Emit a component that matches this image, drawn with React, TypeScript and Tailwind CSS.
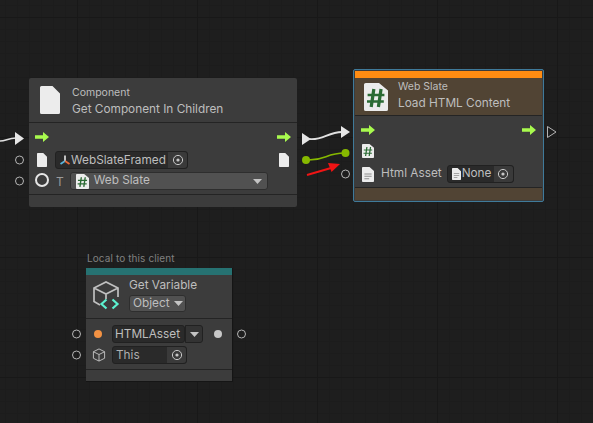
import React from "react";

const FlowArrow = () => (
  <svg width="14" height="10" viewBox="0 0 14 10" className="shrink-0">
    <path d="M0 3.2h8V0l6 5-6 5V6.8H0z" fill="#a8fa4e" />
  </svg>
);

const Doc = ({ w, h, lines, hash }: { w: number; h: number; lines?: boolean; hash?: boolean }) => (
  <svg width={w} height={h} viewBox="0 0 20 28" preserveAspectRatio="none" className="shrink-0">
    <path d="M1.500 0H12.500L20 7.500V26.500A1.500 1.500 0 0 1 18.500 28H1.500A1.500 1.500 0 0 1 0 26.500V1.500A1.500 1.500 0 0 1 1.500 0Z" fill="#ececec" />
    {lines && <path d="M4 12h12v1.800H4zM4 16.500h12v1.800H4zM4 21h8v1.800H4z" fill="#8c8c8c" />}
    {hash && (
      <path
        d="M8.200 6 6 24M14.200 6 12 24M3 12h14M2.500 18.500h14"
        stroke="#2b6b34"
        strokeWidth={w < 20 ? 2.1 : 2.7}
        fill="none"
      />
    )}
  </svg>
);

const Target = () => (
  <svg width="12" height="12" viewBox="0 0 12 12">
    <circle cx="6" cy="6" r="4.600" fill="none" stroke="#c8c8c8" strokeWidth="1" />
    <circle cx="6" cy="6" r="1.600" fill="#c8c8c8" />
  </svg>
);

const Caret = () => (
  <svg width="9" height="5" viewBox="0 0 9 5" className="shrink-0">
    <path d="M0 0h9L4.500 5z" fill="#c4c4c4" />
  </svg>
);

const Cube = ({ size }: { size: number }) => (
  <svg width={size} height={size} viewBox="0 0 14 15" fill="none" stroke="#c4c4c4" strokeWidth="1" className="shrink-0">
    <path d="M7 1 13 4v7l-6 3-6-3V4zM1 4l6 3 6-3M7 7v7" />
  </svg>
);

const VariableIcon = () => (
  <svg width="29" height="30" viewBox="0 0 29 30" fill="none" className="shrink-0">
    <path d="M8 25 2 21.500V8L14 2l12 6v9M2 8l12 6 12-6M14 14v5" stroke="#c0c0c0" strokeWidth="1.700" />
    <path d="M14.500 19.500 9.500 24l5 4.500M20.500 19.500l5 4.500-5 4.500" stroke="#5cf2d0" strokeWidth="2.200" />
  </svg>
);

const UnityMark = () => (
  <svg width="12" height="12" viewBox="0 0 12 12" className="shrink-0">
    <path d="M6 1.500V7" stroke="#e8e8e8" strokeWidth="1.600" />
    <path d="M6 7 1.500 10" stroke="#58b4dc" strokeWidth="1.800" />
    <path d="M6 7l4.500 3" stroke="#e86a3a" strokeWidth="1.800" />
  </svg>
);

function Wires() {
  return (
    <svg width="593" height="423" className="absolute left-0 top-0 pointer-events-none" fill="none">
      <path d="M0 141C6 141 8 138 16 138" stroke="#e0e0e0" strokeWidth="1.600" />
      <path d="M15 132 24 138.500 15 145z" fill="#e6e6e6" />
      <path d="M302 133 311 139 302 145z" fill="#e6e6e6" />
      <path d="M309 139C322 141 328 132 342 132" stroke="#e0e0e0" strokeWidth="1.800" />
      <path d="M341 126 350 132 341 138z" fill="#e6e6e6" />
      <path d="M306 160C326 161 325 153 345 153" stroke="#86b800" strokeWidth="1.600" />
      <circle cx="306" cy="160" r="4" fill="#86b800" />
      <circle cx="345.500" cy="153" r="4" fill="#86b800" />
      <path d="M307 175 331 168" stroke="#f01414" strokeWidth="2" />
      <path d="M340 164 328 163 331.500 172z" fill="#f01414" />
      <path d="M547.500 126.500 556 132 547.500 137.500z" stroke="#b4b4b4" strokeWidth="1" />
      {[
        [19.500, 160],
        [19.500, 181],
        [345.500, 174],
        [76.500, 334],
        [76.500, 355],
        [241.500, 334],
      ].map(([cx, cy]) => (
        <circle key={`${cx}-${cy}`} cx={cx} cy={cy} r="4" stroke="#b4b4b4" strokeWidth="1" />
      ))}
    </svg>
  );
}

export default function App() {
  return (
    <div className="relative w-[593px] h-[423px] overflow-hidden bg-[#1e1e1e] font-[Inter,sans-serif] bg-[linear-gradient(#181818_1px,transparent_1px),linear-gradient(90deg,#181818_1px,transparent_1px),linear-gradient(#1c1c1c_1px,transparent_1px),linear-gradient(90deg,#1c1c1c_1px,transparent_1px)] bg-[size:120px_120px,120px_120px,12px_12px,12px_12px] bg-[position:0_17px,77px_0,0_5px,5px_0]">
      {/* Get Component In Children */}
      <div className="absolute left-[29px] top-[78px] w-[268px] h-[129px] flex flex-col bg-[#3c3c3c] rounded-[2px] text-[#bebebe]">
        <div className="h-[45px] flex items-center pl-[11px] gap-3 border-b border-[#242424]">
          <Doc w={20} h={28} />
          <div className="flex flex-col gap-[3px] pt-[2px]">
            <span className="text-[10.5px] leading-[13px]">Component</span>
            <span className="text-[11.8px] leading-[15px]">Get Component In Children</span>
          </div>
        </div>
        <div className="h-[72px] flex flex-col px-[6px] pt-[9px] border-b border-[#242424]">
          <div className="h-[10px] flex items-center justify-between">
            <FlowArrow />
            <FlowArrow />
          </div>
          <div className="h-[18px] mt-[9px] flex items-center px-[2px]">
            <Doc w={10} h={14} />
            <div className="ml-[8px] w-[133px] h-[18px] flex items-center bg-[#2a2a2a] border border-[#212121] rounded-[3px]">
              <div className="ml-[3px]"><UnityMark /></div>
              <span className="text-[11.8px] leading-none flex-1 pt-px">WebSlateFramed</span>
              <div className="w-[19px] h-full bg-[#3a3a3a] rounded-r-[3px] flex items-center justify-center"><Target /></div>
            </div>
            <div className="ml-auto"><Doc w={10} h={14} /></div>
          </div>
          <div className="h-[18px] mt-[3px] flex items-center">
            <div className="w-[14px] h-[14px] rounded-full border-2 border-[#e6e6e6] -mt-[3px]" />
            <span className="ml-[7px] text-[12px] text-[#9a9a9a] mt-[1px]">T</span>
            <div className="ml-[6px] w-[198px] h-[18px] flex items-center bg-[#515151] border border-[#2e2e2e] rounded-[3px] px-[5px]">
              <Doc w={13} h={15} hash />
              <span className="ml-[5px] text-[11.8px] flex-1">Web Slate</span>
              <Caret />
            </div>
          </div>
        </div>
        <div className="flex-1" />
      </div>

      {/* Load HTML Content */}
      <div className="absolute left-[353px] top-[69px] w-[191px] h-[133px] flex flex-col bg-[#3c3c3c] border border-[#3f7a9a] rounded-[2px] p-px text-[#bebebe]">
        <div className="h-[7px] bg-[#ff8c12]" />
        <div className="h-[38px] flex items-center pl-[9px] gap-[10px] bg-[#514434] border-b border-[#242424]">
          <Doc w={24} h={28} hash />
          <div className="flex flex-col gap-[3px] pb-[2px]">
            <span className="text-[10.5px] leading-[13px]">Web Slate</span>
            <span className="text-[11.8px] leading-[15px]">Load HTML Content</span>
          </div>
        </div>
        <div className="h-[72px] flex flex-col px-[6px] pt-[9px] border-b border-[#242424]">
          <div className="h-[10px] flex items-center justify-between">
            <FlowArrow />
            <FlowArrow />
          </div>
          <div className="mt-[9px] ml-[1px] h-[14px] flex items-center">
            <Doc w={12} h={14} hash />
          </div>
          <div className="mt-[7px] ml-[1px] h-[18px] flex items-center">
            <Doc w={12} h={15} lines />
            <span className="ml-[7px] text-[11.8px]">Html Asset</span>
            <div className="ml-[5px] w-[67px] h-[18px] flex items-center bg-[#2a2a2a] border border-[#212121] rounded-[3px]">
              <div className="ml-[4px] flex"><Doc w={9} h={12} lines /></div>
              <span className="ml-[1px] text-[11.8px] flex-1">None</span>
              <div className="w-[19px] h-full bg-[#3a3a3a] rounded-r-[3px] flex items-center justify-center"><Target /></div>
            </div>
          </div>
        </div>
        <div className="flex-1 bg-[#514434]" />
      </div>

      {/* Get Variable */}
      <span className="absolute left-[87px] top-[252px] text-[10px] tracking-[0.1px] leading-[13px] text-[#808080]">Local to this client</span>
      <div className="absolute left-[86px] top-[268px] w-[147px] h-[114px] flex flex-col bg-[#3c3c3c] border-r border-b border-[#151515] text-[#bebebe]">
        <div className="h-[7px] bg-[#267272]" />
        <div className="h-[44px] flex items-center pl-[6px] gap-[8px] pb-[3px] border-b border-[#242424]">
          <VariableIcon />
          <div className="flex flex-col gap-[2px]">
            <span className="text-[11.8px] leading-[15px]">Get Variable</span>
            <div className="w-[57px] h-[17px] flex items-center gap-[4px] pl-[3px] bg-[#515151] border border-[#2e2e2e] rounded-[3px]">
              <span className="text-[11.8px] leading-none">Object</span>
              <Caret />
            </div>
          </div>
        </div>
        <div className="h-[51px] flex flex-col pt-[6px] border-b border-[#242424]">
          <div className="h-[18px] flex items-center pl-[8px]">
            <div className="w-[8px] h-[8px] rounded-full bg-[#f39243]" />
            <div className="ml-[10px] w-[73px] h-[18px] flex items-center pl-[2px] bg-[#2a2a2a] border border-[#212121] rounded-[3px]">
              <span className="text-[11.8px] leading-none pt-px">HTMLAsset</span>
            </div>
            <div className="w-[18px] h-[18px] flex items-center justify-center bg-[#333333] border border-[#212121] rounded-r-[3px]">
              <Caret />
            </div>
            <div className="ml-[11px] w-[8px] h-[8px] rounded-full bg-[#c8c8c8]" />
          </div>
          <div className="h-[18px] mt-[3px] flex items-center pl-[6px]">
            <Cube size={14} />
            <div className="ml-[6px] w-[75px] h-[18px] flex items-center pl-[3px] bg-[#2a2a2a] border border-[#212121] rounded-[3px]">
              <span className="text-[11.8px] leading-none flex-1 pt-px text-[#b0b0b0]">This</span>
              <div className="w-[19px] h-full bg-[#3a3a3a] rounded-r-[3px] flex items-center justify-center"><Target /></div>
            </div>
          </div>
        </div>
      </div>

      <Wires />
    </div>
  );
}
